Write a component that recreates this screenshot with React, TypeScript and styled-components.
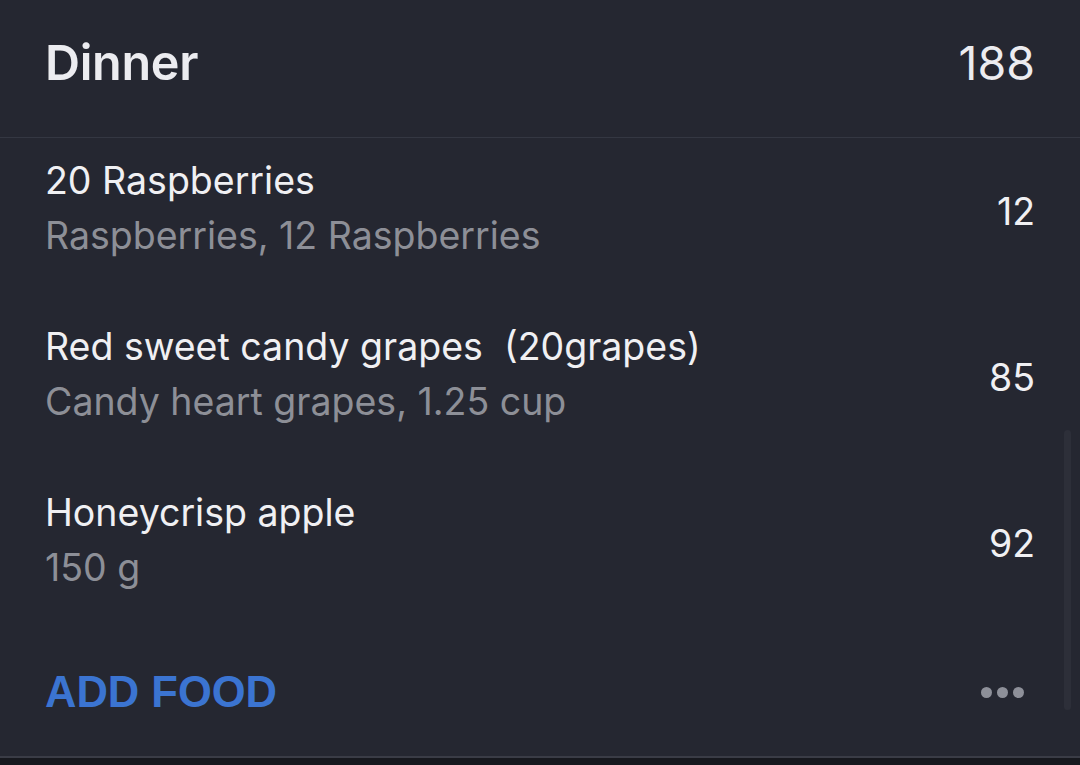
import React from "react";
import styled, { createGlobalStyle } from "styled-components";

const Global = createGlobalStyle`
  html, body { margin: 0; padding: 0; background: #252731; }
  body { font-family: Inter, "Noto Sans", sans-serif; -webkit-font-smoothing: antialiased; }
`;

const Screen = styled.div`
  width: 1080px;
  height: 765px;
  background: #252731;
  display: flex;
  flex-direction: column;
  position: relative;
  overflow: hidden;
`;

const Header = styled.div`
  height: 138px;
  box-sizing: border-box;
  padding: 0 45px;
  display: flex;
  align-items: center;
  justify-content: space-between;
  border-bottom: 1.5px solid #343742;
`;

const Title = styled.div`
  font-size: 48.5px;
  font-weight: 600;
  color: #ececf0;
  letter-spacing: -0.3px;
  margin-top: -12px;
`;

const Total = styled.div`
  font-size: 46.5px;
  font-weight: 400;
  color: #ececf0;
  margin-top: -12px;
`;

const List = styled.div`
  display: flex;
  flex-direction: column;
  padding-top: 2px;
`;

const Row = styled.div`
  height: 166px;
  box-sizing: border-box;
  padding: 18px 45px 0;
  display: flex;
  align-items: flex-start;
  justify-content: space-between;
`;

const Texts = styled.div`
  display: flex;
  flex-direction: column;
  gap: 10px;
`;

const Name = styled.div`
  font-size: 37.5px;
  color: #f0f0f3;
  line-height: 45px;
  white-space: pre;
`;

const Detail = styled.div`
  font-size: 37.5px;
  color: #8d8f97;
  line-height: 45px;
`;

const Value = styled.div`
  font-size: 37.5px;
  color: #f0f0f3;
  line-height: 45px;
  margin-top: 31px;
`;

const Footer = styled.div`
  height: 108px;
  box-sizing: border-box;
  padding: 0 54px 0 45px;
  display: flex;
  align-items: center;
  justify-content: space-between;
`;

const AddFood = styled.div`
  font-family: "Liberation Sans", Arial, sans-serif;
  font-weight: 700;
  font-size: 43.5px;
  color: #3b74d1;
`;

const Dots = styled.div`
  display: flex;
  gap: 5px;
  margin-right: 2px;
`;

const Dot = styled.span`
  width: 11px;
  height: 11px;
  border-radius: 50%;
  background: #8e9099;
`;

const Scrollbar = styled.div`
  position: absolute;
  right: 9px;
  top: 430px;
  width: 7px;
  height: 280px;
  border-radius: 4px;
  background: #2d2f39;
`;

const Bottom = styled.div`
  margin-top: auto;
  height: 7px;
  border-top: 2px solid #3a3c46;
  background: #17181e;
`;

const items = [
  { name: "20 Raspberries", detail: "Raspberries, 12 Raspberries", value: "12" },
  { name: "Red sweet candy grapes  (20grapes)", detail: "Candy heart grapes, 1.25 cup", value: "85" },
  { name: "Honeycrisp apple", detail: "150 g", value: "92" },
];

export default function App() {
  return (
    <Screen>
      <Global />
      <Header>
        <Title>Dinner</Title>
        <Total>188</Total>
      </Header>
      <List>
        {items.map((it) => (
          <Row key={it.name}>
            <Texts>
              <Name>{it.name}</Name>
              <Detail>{it.detail}</Detail>
            </Texts>
            <Value>{it.value}</Value>
          </Row>
        ))}
      </List>
      <Footer>
        <AddFood>ADD FOOD</AddFood>
        <Dots>
          <Dot />
          <Dot />
          <Dot />
        </Dots>
      </Footer>
      <Scrollbar />
      <Bottom />
    </Screen>
  );
}
